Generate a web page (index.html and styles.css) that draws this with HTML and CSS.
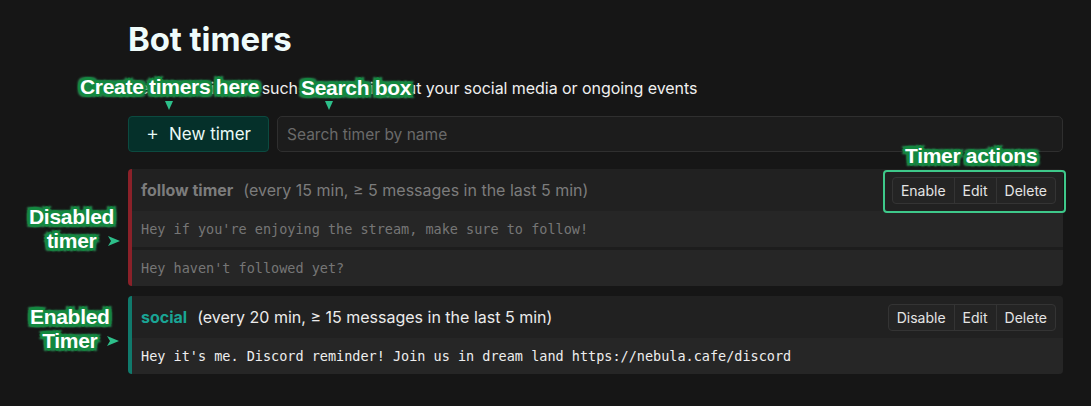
FILE: index.html
```html
<!DOCTYPE html>
<html>
<head>
<meta charset="utf-8">
<link rel="stylesheet" href="styles.css">
</head>
<body>
<main class="page">
  <h1 class="title">Bot timers</h1>
  <p class="subtitle">Define reminders such as checking out your social media or ongoing events</p>
  <div class="toolbar">
    <button class="new-btn"><span class="plus">+</span>New timer</button>
    <input class="search" type="text" placeholder="Search timer by name">
  </div>
  <div class="timers">
    <section class="timer disabled">
      <div class="timer-head">
        <div class="timer-title"><span class="name">follow timer</span><span class="desc">(every 15 min, ≥ 5 messages in the last 5 min)</span></div>
        <div class="actions"><button>Enable</button><button>Edit</button><button>Delete</button></div>
      </div>
      <div class="msg">Hey if you're enjoying the stream, make sure to follow!</div>
      <div class="msg">Hey haven't followed yet?</div>
    </section>
    <section class="timer enabled">
      <div class="timer-head">
        <div class="timer-title"><span class="name">social</span><span class="desc">(every 20 min, ≥ 15 messages in the last 5 min)</span></div>
        <div class="actions"><button>Disable</button><button>Edit</button><button>Delete</button></div>
      </div>
      <div class="msg">Hey it's me. Discord reminder! Join us in dream land https://nebula.cafe/discord</div>
    </section>
  </div>
</main>

<div class="note note-create">Create timers here</div>
<div class="tri tri-down tri-create"></div>
<div class="note note-search">Search box</div>
<div class="tri tri-down tri-search"></div>
<div class="note note-actions">Timer actions</div>
<div class="actions-frame"></div>
<div class="note note-disabled">Disabled<br>timer</div>
<svg class="arrow arrow-disabled" width="12" height="10" viewBox="0 0 12 10"><path d="M0 0 L12 5 L0 10 L3 5 Z" fill="#2dbf8a"/></svg>
<div class="note note-enabled">Enabled<br>Timer</div>
<svg class="arrow arrow-enabled" width="12" height="10" viewBox="0 0 12 10"><path d="M0 0 L12 5 L0 10 L3 5 Z" fill="#2dbf8a"/></svg>
</body>
</html>
```

FILE: styles.css
```css
* { box-sizing: border-box; }
html, body { margin: 0; padding: 0; }
body {
  background: #161616;
  color: #e8e8e8;
  font-family: Inter, "Noto Sans", sans-serif;
  width: 1091px;
  height: 406px;
  overflow: hidden;
  position: relative;
}
.page {
  padding: 18px 28px 0 128px;
}
.title {
  margin: 0;
  font-size: 33px;
  font-weight: 700;
  line-height: 42px;
  color: #effcfb;
  letter-spacing: -0.1px;
}
.subtitle {
  margin: 18px 0 0 0;
  font-size: 16px;
  line-height: 20px;
  color: #f0f0f0;
  letter-spacing: -0.05px;
}
.toolbar {
  display: flex;
  gap: 8px;
  margin-top: 18px;
  height: 36px;
}
.new-btn {
  width: 141px;
  flex: none;
  background: #05302a;
  border: 1px solid #0c4a40;
  border-radius: 4px;
  color: #eafaf7;
  font-family: Inter, sans-serif;
  font-size: 17px;
  display: flex;
  align-items: center;
  justify-content: center;
  gap: 10px;
  padding: 0;
}
.plus { font-size: 20px; font-weight: 300; line-height: 1; margin-top: -2px; }
.search {
  flex: 1;
  background: #1c1c1c;
  border: 1px solid #2f2f2f;
  border-radius: 5px;
  color: #ddd;
  font-family: Inter, sans-serif;
  font-size: 15.5px;
  padding: 0 9px;
}
.search::placeholder { color: #6a6a6a; }
.timers {
  margin-top: 17px;
  display: flex;
  flex-direction: column;
  gap: 10px;
}
.timer {
  border-left: 4px solid #8b2129;
  border-radius: 4px;
  background: #1d1d1d;
  display: flex;
  flex-direction: column;
  gap: 3px;
  overflow: hidden;
}
.timer.enabled { border-left-color: #107a6c; }
.timer-head {
  background: #212121;
  height: 42px;
  display: flex;
  align-items: center;
  justify-content: space-between;
  padding: 0 7px 0 9px;
  margin-bottom: -3px;
}
.timer-title { font-size: 16px; }
.name { font-weight: 700; margin-right: 10px; }
.disabled .name, .disabled .desc { color: #7c7c7c; }
.enabled .name { color: #1aa595; }
.enabled .desc { color: #ececec; }
.actions {
  display: flex;
  background: #242424;
  border: 1px solid #343434;
  border-radius: 4px;
  height: 27px;
}
.actions button {
  background: transparent;
  border: none;
  border-left: 1px solid #343434;
  color: #e4e4e4;
  font-family: Inter, sans-serif;
  font-size: 14px;
  padding: 0 8px;
}
.actions button:first-child { border-left: none; }
.msg {
  background: #262626;
  height: 36px;
  display: flex;
  align-items: center;
  padding-left: 9px;
  font-family: "DejaVu Sans Mono", "Liberation Mono", monospace;
  font-size: 13.5px;
  color: #eeeeee;
}
.disabled .msg { color: #767676; }

/* annotation overlays */
.note {
  position: absolute;
  font-family: "Liberation Sans", Arial, sans-serif;
  font-weight: 700;
  font-size: 21px;
  line-height: 24px;
  color: #fff;
  text-align: center;
  text-shadow:
    2px 0 0 #13883f, -2px 0 0 #13883f, 0 2px 0 #13883f, 0 -2px 0 #13883f,
    2px 2px 0 #13883f, -2px -2px 0 #13883f, 2px -2px 0 #13883f, -2px 2px 0 #13883f,
    3px 0 1px #13883f, -3px 0 1px #13883f, 0 3px 1px #13883f, 0 -3px 1px #13883f,
    3px 3px 2px #2a8a55, -3px -3px 2px #2a8a55, 3px -3px 2px #2a8a55, -3px 3px 2px #2a8a55;
  white-space: nowrap;
  letter-spacing: -0.3px;
}
.note-create { left: 80px; top: 75px; }
.note-search { left: 301px; top: 76px; }
.note-actions { left: 905px; top: 144px; }
.note-disabled { left: 29px; top: 205px; }
.note-enabled { left: 30px; top: 305px; }
.tri { position: absolute; width: 0; height: 0; }
.tri-down {
  border-left: 4px solid transparent;
  border-right: 4px solid transparent;
  border-top: 9px solid #2dbf8a;
}
.tri-create { left: 165px; top: 101px; }
.tri-search { left: 325px; top: 101px; }
.arrow { position: absolute; }
.arrow-disabled { left: 108px; top: 236px; }
.arrow-enabled { left: 107px; top: 336px; }
.actions-frame {
  position: absolute;
  left: 883px;
  top: 170px;
  width: 183px;
  height: 43px;
  border: 2px solid #3ec88a;
  border-radius: 4px;
}
```
